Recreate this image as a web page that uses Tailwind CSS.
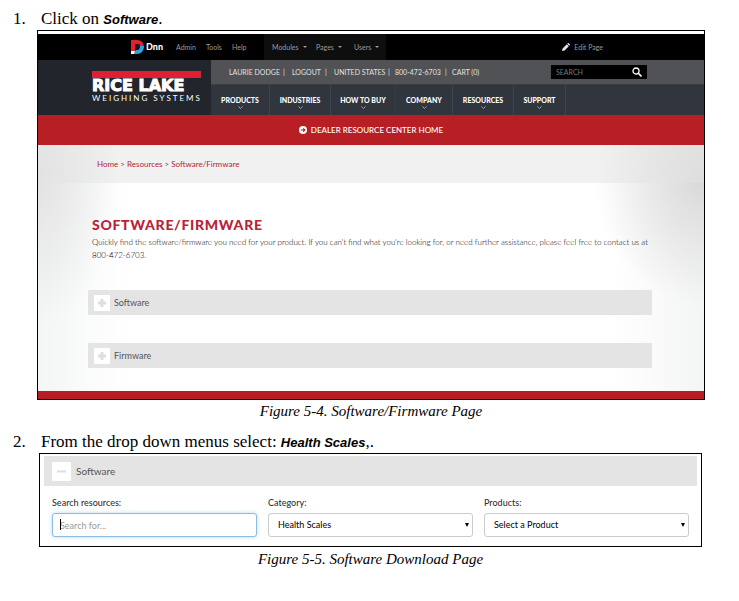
<!DOCTYPE html>
<html lang="en">
<head>
    <meta charset="UTF-8">
    <meta name="viewport" content="width=device-width, initial-scale=1.0">
    <title>Software/Firmware</title>
    <script src="https://cdn.jsdelivr.net/npm/@tailwindcss/browser@4"></script>
</head>
<body class="bg-white text-black font-['Liberation_Serif',serif]">
    <main class="pt-2 pl-[13px] pr-[34px]">
        <!-- Step 1 -->
        <div class="flex items-center h-[22px] text-[17px] leading-[22px]">
            <span class="w-7">1.</span>
            <p>Click on <b class="font-['Liberation_Sans',sans-serif] italic text-[13px]">Software</b>.</p>
        </div>

        <figure class="ml-6">
            <div class="border border-black pt-[3px] font-['Lato',sans-serif]">
                <!-- Admin bar -->
                <div class="flex items-center h-[26px] bg-black text-[#9a9a9a] text-[7px] pl-[93px] pr-[101px]">
                    <a href="#" class="flex items-center gap-[2px] w-[45px] text-white font-black text-[9px]">
                        <svg class="w-[13px] h-[14px]" viewBox="0 0 13 14">
                            <path d="M0 0h6c4.500 0 7 3 7 7H9L8 4H4v7H0z" fill="#e2202f"/>
                            <path d="M13 6c0 5-3 8-7 8H3l1-4h2c2 0 3-2 3-4z" fill="#2fa4d8"/>
                            <path d="M4 4h4l1 3-5 4z" fill="#26161f"/>
                            <path d="M0 11h4l-1 3H0z" fill="#fff"/>
                        </svg>
                        <span>Dnn</span>
                    </a>
                    <a href="#" class="w-[30px]">Admin</a>
                    <a href="#" class="w-[26px]">Tools</a>
                    <a href="#" class="w-[32px]">Help</a>
                    <div class="flex items-center h-full bg-[#0e0e0e] pl-[8px] w-[122px]">
                        <button class="flex items-center gap-1 w-11">Modules <span class="border-x-2 border-x-transparent border-t-2 border-t-[#9a9a9a]"></span></button>
                        <button class="flex items-center gap-1 w-[38px]">Pages <span class="border-x-2 border-x-transparent border-t-2 border-t-[#9a9a9a]"></span></button>
                        <button class="flex items-center gap-1">Users <span class="border-x-2 border-x-transparent border-t-2 border-t-[#9a9a9a]"></span></button>
                    </div>
                    <button class="flex items-center gap-1 ml-auto">
                        <svg class="w-2 h-2" viewBox="0 0 8 8" fill="#e5e5e5"><path d="M0 8l.6-2.6L4.800 1.200l2 2L2.600 7.400zM5.300.7l.6-.6c.3-.2.600-.1.8.1l1.100 1.100c.2.2.2.5 0 .7l-.6.7z"/></svg>
                        Edit Page
                    </button>
                </div>

                <!-- Site header -->
                <header class="flex h-[55px]">
                    <div class="w-[173px] bg-[#22252b] pl-[54px] pt-[11px] text-white">
                        <div class="w-[109px] h-[7px] bg-[#e01f35]"></div>
                        <div class="font-['DejaVu_Sans',sans-serif] font-bold text-[16px] leading-[16px] whitespace-nowrap [-webkit-text-stroke:1px_white]">RICE LAKE</div>
                        <div class="text-[8px] leading-[9px] tracking-[2px] whitespace-nowrap">WEIGHING SYSTEMS</div>
                    </div>
                    <div class="flex-1">
                        <div class="flex items-center h-6 bg-[#505256] text-[#e0e0e0] text-[7px] pl-[18px] pr-[57px]">
                            <a href="#" class="w-[54px]">LAURIE DODGE</a><span class="w-[9px]">|</span>
                            <a href="#" class="w-[33px]">LOGOUT</a><span class="w-[9px]">|</span>
                            <a href="#" class="w-[54px]">UNITED STATES</a><span class="w-[7px]">|</span>
                            <a href="#" class="w-[50px]">800-472-6703</a><span class="w-[7px]">|</span>
                            <a href="#">CART (0)</a>
                            <form class="flex items-center ml-auto w-24 h-[14px] bg-black pl-[5px] pr-[5px]">
                                <input type="text" aria-label="Search" placeholder="SEARCH" class="flex-1 min-w-0 bg-transparent outline-none placeholder:text-[#777]">
                                <button type="button" aria-label="Search"><svg class="w-[10px] h-[10px]" viewBox="0 0 10 10" fill="none" stroke="#fff"><circle cx="4" cy="4" r="3" stroke-width="1.300"/><path d="M6.300 6.300L9.500 9.500" stroke-width="1.600"/></svg></button>
                            </form>
                        </div>
                        <nav class="flex h-[31px] bg-[#31353e] text-white text-[7px] leading-[8px] font-black border-t border-[#3b3e45]">
                            <a href="#" class="w-[59px] pt-[11px] flex flex-col items-center border-r border-[#41454d]">PRODUCTS<svg class="w-[5px] h-[5px] mt-px" viewBox="0 0 5 5" fill="none" stroke="#a0a4aa"><path d="M.5 1.500l2 2 2-2"/></svg></a>
                            <a href="#" class="w-[61px] pt-[11px] flex flex-col items-center border-r border-[#41454d]">INDUSTRIES<svg class="w-[5px] h-[5px] mt-px" viewBox="0 0 5 5" fill="none" stroke="#a0a4aa"><path d="M.5 1.500l2 2 2-2"/></svg></a>
                            <a href="#" class="w-[65px] pt-[11px] flex flex-col items-center border-r border-[#373b43]">HOW TO BUY<svg class="w-[5px] h-[5px] mt-px" viewBox="0 0 5 5" fill="none" stroke="#a0a4aa"><path d="M.5 1.500l2 2 2-2"/></svg></a>
                            <a href="#" class="w-[57px] pt-[11px] flex flex-col items-center border-r border-[#41454d]">COMPANY<svg class="w-[5px] h-[5px] mt-px" viewBox="0 0 5 5" fill="none" stroke="#a0a4aa"><path d="M.5 1.500l2 2 2-2"/></svg></a>
                            <a href="#" class="w-[61px] pt-[11px] flex flex-col items-center border-r border-[#41454d]">RESOURCES<svg class="w-[5px] h-[5px] mt-px" viewBox="0 0 5 5" fill="none" stroke="#a0a4aa"><path d="M.5 1.500l2 2 2-2"/></svg></a>
                            <a href="#" class="w-[52px] pt-[11px] flex flex-col items-center border-r border-[#41454d]">SUPPORT<svg class="w-[5px] h-[5px] mt-px" viewBox="0 0 5 5" fill="none" stroke="#a0a4aa"><path d="M.5 1.500l2 2 2-2"/></svg></a>
                        </nav>
                    </div>
                </header>

                <a href="#" class="flex items-center justify-center gap-1 h-[30px] bg-[#b71f25] text-white text-[8px] font-medium">
                    <svg class="w-2 h-2" viewBox="0 0 8 8"><circle cx="4" cy="4" r="4" fill="#fff"/><path d="M1.800 4h4M4.200 2.300L5.900 4 4.200 5.700" fill="none" stroke="#b71f25" stroke-width="1.100"/></svg>
                    DEALER RESOURCE CENTER HOME
                </a>

                <!-- Page content -->
                <div class="bg-[radial-gradient(ellipse_110px_130px_at_100%_12%,#d8d8d8,transparent),radial-gradient(ellipse_80px_150px_at_0%_12%,#e2e2e2,transparent),linear-gradient(to_right,#f4f6f6,white_14%,white_86%,#f4f5f5)]">
                    <div class="h-[38px] pl-[59px] flex items-center gap-[2px] bg-[#e4e4e4]/50 text-[#b5223c] text-[8px]">
                        <a href="#">Home</a> &gt; <a href="#">Resources</a> &gt; <a href="#">Software/Firmware</a>
                    </div>
                    <div class="pl-[50px] pt-8 pb-[23px]">
                        <div class="pl-1">
                            <h1 class="text-[#b92237] text-[14px] leading-5 font-black tracking-wider">SOFTWARE/FIRMWARE</h1>
                            <p class="text-black font-light text-[8px] leading-[13px] mt-px">Quickly find the software/firmware you need for your product. If you can't find what you're looking for, or need further assistance, please feel free to contact us at<br>800-472-6703.</p>
                        </div>
                        <div class="flex flex-col gap-7 mt-7 mr-[52px]">
                            <button class="flex items-center gap-1 h-[25px] bg-[#e4e4e4] pl-[6px] text-[#555] text-[9px]">
                                <svg class="w-4 h-4 bg-white" viewBox="0 0 16 16" stroke="#dedede" stroke-width="3"><path d="M8 4v8M4 8h8"/></svg>
                                Software
                            </button>
                            <button class="flex items-center gap-1 h-[25px] bg-[#e4e4e4] pl-[6px] text-[#555] text-[9px]">
                                <svg class="w-4 h-4 bg-white" viewBox="0 0 16 16" stroke="#dedede" stroke-width="3"><path d="M8 4v8M4 8h8"/></svg>
                                Firmware
                            </button>
                        </div>
                    </div>
                    <div class="h-2 bg-[#b71c24]"></div>
                </div>
            </div>
            <figcaption class="text-center italic text-[15px] leading-[22px]">Figure 5-4. Software/Firmware Page</figcaption>
        </figure>

        <!-- Step 2 -->
        <div class="flex items-center h-[22px] mt-[9px] text-[17px] leading-[22px]">
            <span class="w-7">2.</span>
            <p>From the drop down menus select: <b class="font-['Liberation_Sans',sans-serif] italic text-[13px]">Health Scales</b>,.</p>
        </div>

        <figure class="ml-[26px] mr-[3px]">
            <div class="border border-black pt-[2px] px-1 pb-[9px] font-['Lato',sans-serif]">
                <button class="flex items-center gap-[5px] w-full h-[30px] bg-[#e4e4e4] pl-2 text-[#555] text-[10px]">
                    <svg class="w-[19px] h-[19px] bg-white" viewBox="0 0 19 19" stroke="#dedede" stroke-width="2"><path d="M5 9.500h9"/></svg>
                    Software
                </button>
                <form class="grid grid-cols-3 gap-[11px] px-2 pt-[11px] text-[9px] text-[#333]">
                    <div>
                        <label for="search" class="block leading-3 mb-1 font-medium">Search resources:</label>
                        <div class="relative">
                            <input id="search" type="text" placeholder="Search for..." class="w-full h-6 px-[7px] bg-white border border-[#8fbbe0] rounded-[3px] shadow-[0_0_4px_#b9dbf2] outline-none placeholder:text-[#999]">
                            <span class="absolute left-2 top-[6px] w-px h-[11px] bg-black"></span>
                        </div>
                    </div>
                    <div>
                        <label for="category" class="block leading-3 mb-1 font-medium">Category:</label>
                        <div class="relative">
                            <select id="category" class="appearance-none w-full h-6 px-[9px] bg-white border border-[#ccc] rounded-[3px] text-black"><option>Health Scales</option></select>
                            <span class="absolute right-1 top-[10px] border-x-2 border-x-transparent border-t-4 border-t-black pointer-events-none"></span>
                        </div>
                    </div>
                    <div>
                        <label for="products" class="block leading-3 mb-1 font-medium">Products:</label>
                        <div class="relative">
                            <select id="products" class="appearance-none w-full h-6 px-[9px] bg-white border border-[#ccc] rounded-[3px] text-black"><option>Select a Product</option></select>
                            <span class="absolute right-1 top-[10px] border-x-2 border-x-transparent border-t-4 border-t-black pointer-events-none"></span>
                        </div>
                    </div>
                </form>
            </div>
            <figcaption class="text-center italic text-[15px] leading-[24px]">Figure 5-5. Software Download Page</figcaption>
        </figure>
    </main>
</body>
</html>
